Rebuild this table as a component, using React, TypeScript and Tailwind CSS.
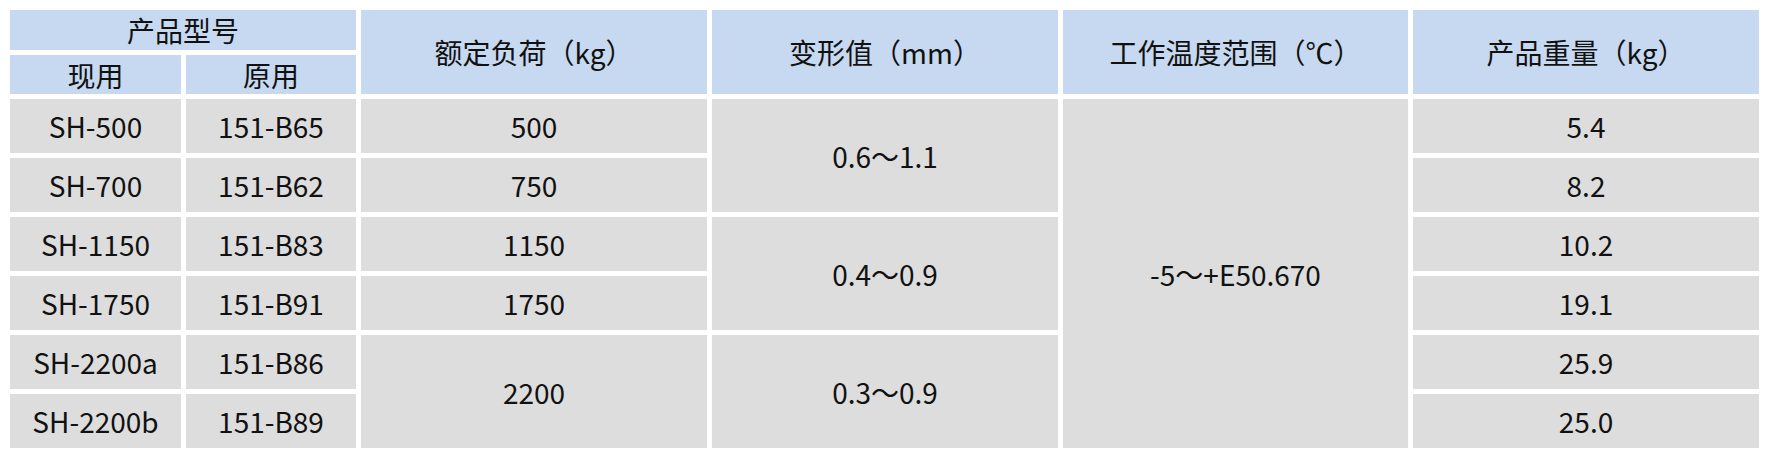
const font = "font-['Noto_Sans_CJK_SC','Noto_Sans',sans-serif]";

type Cell = { text: string; span?: "row-span-2" | "row-span-6" };

const models = [
  ["SH-500", "151-B65"],
  ["SH-700", "151-B62"],
  ["SH-1150", "151-B83"],
  ["SH-1750", "151-B91"],
  ["SH-2200a", "151-B86"],
  ["SH-2200b", "151-B89"],
];

const weights = ["5.4", "8.2", "10.2", "19.1", "25.9", "25.0"];

function Head({ children, className = "" }: { children: React.ReactNode; className?: string }) {
  return (
    <div className={`bg-[#c6d9f0] flex items-center justify-center ${className}`}>
      <span className="leading-none">{children}</span>
    </div>
  );
}

function Body({ children, className = "" }: { children: React.ReactNode; className?: string }) {
  return (
    <div className={`bg-[#dddddd] flex items-center justify-center ${className}`}>
      <span className="leading-none">{children}</span>
    </div>
  );
}

export default function App() {
  const load: Cell[] = [
    { text: "500" },
    { text: "750" },
    { text: "1150" },
    { text: "1750" },
    { text: "2200", span: "row-span-2" },
  ];
  const deform: Cell[] = [
    { text: "0.6～1.1", span: "row-span-2" },
    { text: "0.4～0.9", span: "row-span-2" },
    { text: "0.3～0.9", span: "row-span-2" },
  ];

  return (
    <div className={`bg-white w-[1773px] h-[458px] pt-[10px] pl-[10px] ${font} font-normal text-[28px] text-[#111111]`}>
      <div className="grid grid-cols-[171px_170px_346px_346px_345px_346px] grid-rows-[40px_39px_repeat(6,54px)] gap-[5px] w-fit grid-flow-col">
        {/* header */}
        <Head className="col-start-1 col-span-2 row-start-1">产品型号</Head>
        <Head className="col-start-1 row-start-2">现用</Head>
        <Head className="col-start-2 row-start-2">原用</Head>
        <Head className="col-start-3 row-start-1 row-span-2">额定负荷（kg）</Head>
        <Head className="col-start-4 row-start-1 row-span-2">变形值（mm）</Head>
        <Head className="col-start-5 row-start-1 row-span-2">工作温度范围（℃）</Head>
        <Head className="col-start-6 row-start-1 row-span-2">产品重量（kg）</Head>

        {/* models */}
        {models.map(([cur]) => (
          <Body key={cur} className="col-start-1">{cur}</Body>
        ))}
        {models.map(([, old]) => (
          <Body key={old} className="col-start-2">{old}</Body>
        ))}

        {load.map((c) => (
          <Body key={c.text} className={`col-start-3 ${c.span ?? ""}`}>{c.text}</Body>
        ))}

        {deform.map((c) => (
          <Body key={c.text + "d"} className={`col-start-4 ${c.span ?? ""}`}>{c.text}</Body>
        ))}

        <Body className="col-start-5 row-span-6">-5～+E50.670</Body>

        {weights.map((w) => (
          <Body key={w} className="col-start-6">{w}</Body>
        ))}
      </div>
    </div>
  );
}
